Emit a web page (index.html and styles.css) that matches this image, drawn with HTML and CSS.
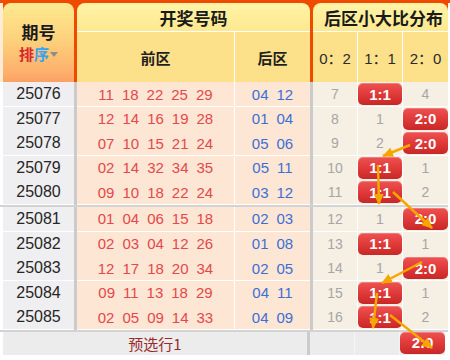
FILE: index.html
```html
<!DOCTYPE html>
<html lang="zh">
<head>
<meta charset="utf-8">
<link rel="stylesheet" href="styles.css">
</head>
<body>
<div class="board">
  <div class="head">
    <div class="h-issue">
      <div class="h-issue-title">期号</div>
      <div class="h-sort"><span class="s-red">排</span><span class="s-blue">序</span><span class="tri"></span></div>
    </div>
    <div class="h-group h-draw">
      <div class="h-title">开奖号码</div>
      <div class="h-sub">
        <div class="h-cell h-front">前区</div>
        <div class="h-cell">后区</div>
      </div>
    </div>
    <div class="h-group h-dist">
      <div class="h-title">后区小大比分布</div>
      <div class="h-sub h-sub3">
        <div class="h-cell h-ratio">0：2</div>
        <div class="h-cell h-ratio">1：1</div>
        <div class="h-cell h-ratio h-last">2：0</div>
      </div>
    </div>
  </div>

  <div class="group">
    <div class="row">
      <div class="c-issue">25076</div><div class="c-sep"></div>
      <div class="c-front"><span>11</span><span>18</span><span>22</span><span>25</span><span>29</span></div>
      <div class="c-back"><span>04</span><span>12</span></div><div class="c-sep"></div>
      <div class="c-d">7</div><div class="c-d"><b class="badge">1:1</b></div><div class="c-d">4</div>
    </div>
    <div class="row">
      <div class="c-issue">25077</div><div class="c-sep"></div>
      <div class="c-front"><span>12</span><span>14</span><span>16</span><span>19</span><span>28</span></div>
      <div class="c-back"><span>01</span><span>04</span></div><div class="c-sep"></div>
      <div class="c-d">8</div><div class="c-d">1</div><div class="c-d"><b class="badge">2:0</b></div>
    </div>
    <div class="row">
      <div class="c-issue">25078</div><div class="c-sep"></div>
      <div class="c-front"><span>07</span><span>10</span><span>15</span><span>21</span><span>24</span></div>
      <div class="c-back"><span>05</span><span>06</span></div><div class="c-sep"></div>
      <div class="c-d">9</div><div class="c-d">2</div><div class="c-d"><b class="badge">2:0</b></div>
    </div>
    <div class="row">
      <div class="c-issue">25079</div><div class="c-sep"></div>
      <div class="c-front"><span>02</span><span>14</span><span>32</span><span>34</span><span>35</span></div>
      <div class="c-back"><span>05</span><span>11</span></div><div class="c-sep"></div>
      <div class="c-d">10</div><div class="c-d"><b class="badge">1:1</b></div><div class="c-d">1</div>
    </div>
    <div class="row">
      <div class="c-issue">25080</div><div class="c-sep"></div>
      <div class="c-front"><span>09</span><span>10</span><span>18</span><span>22</span><span>24</span></div>
      <div class="c-back"><span>03</span><span>12</span></div><div class="c-sep"></div>
      <div class="c-d">11</div><div class="c-d"><b class="badge">1:1</b></div><div class="c-d">2</div>
    </div>
  </div>

  <div class="group">
    <div class="row">
      <div class="c-issue">25081</div><div class="c-sep"></div>
      <div class="c-front"><span>01</span><span>04</span><span>06</span><span>15</span><span>18</span></div>
      <div class="c-back"><span>02</span><span>03</span></div><div class="c-sep"></div>
      <div class="c-d">12</div><div class="c-d">1</div><div class="c-d"><b class="badge">2:0</b></div>
    </div>
    <div class="row">
      <div class="c-issue">25082</div><div class="c-sep"></div>
      <div class="c-front"><span>02</span><span>03</span><span>04</span><span>12</span><span>26</span></div>
      <div class="c-back"><span>01</span><span>08</span></div><div class="c-sep"></div>
      <div class="c-d">13</div><div class="c-d"><b class="badge">1:1</b></div><div class="c-d">1</div>
    </div>
    <div class="row">
      <div class="c-issue">25083</div><div class="c-sep"></div>
      <div class="c-front"><span>12</span><span>17</span><span>18</span><span>20</span><span>34</span></div>
      <div class="c-back"><span>02</span><span>05</span></div><div class="c-sep"></div>
      <div class="c-d">14</div><div class="c-d">1</div><div class="c-d"><b class="badge">2:0</b></div>
    </div>
    <div class="row">
      <div class="c-issue">25084</div><div class="c-sep"></div>
      <div class="c-front"><span>09</span><span>11</span><span>13</span><span>18</span><span>29</span></div>
      <div class="c-back"><span>04</span><span>11</span></div><div class="c-sep"></div>
      <div class="c-d">15</div><div class="c-d"><b class="badge">1:1</b></div><div class="c-d">1</div>
    </div>
    <div class="row">
      <div class="c-issue">25085</div><div class="c-sep"></div>
      <div class="c-front"><span>02</span><span>05</span><span>09</span><span>14</span><span>33</span></div>
      <div class="c-back"><span>04</span><span>09</span></div><div class="c-sep"></div>
      <div class="c-d">16</div><div class="c-d"><b class="badge">1:1</b></div><div class="c-d">2</div>
    </div>
  </div>

  <div class="foot">
    <div class="f-label">预选行1</div><div class="c-sep"></div>
    <div class="f-d"></div><div class="f-d"></div><div class="f-d"><b class="badge">2:0</b></div>
  </div>

  <svg class="arrows" width="450" height="360" viewBox="0 0 450 360">
    <defs>
      <marker id="ah" markerUnits="userSpaceOnUse" markerWidth="11" markerHeight="10" refX="10" refY="5" orient="auto">
        <path d="M0,0 L11,5 L0,10 Z" fill="#f7a600"/>
      </marker>
    </defs>
    <g stroke="#f7a600" stroke-width="2.5" fill="none" marker-end="url(#ah)">
      <line x1="410" y1="145" x2="383" y2="156"/>
      <line x1="378" y1="165" x2="379" y2="204"/>
      <line x1="393" y1="192" x2="432" y2="228"/>
      <line x1="422" y1="262" x2="382" y2="283"/>
      <line x1="377" y1="293" x2="373" y2="328"/>
      <line x1="390" y1="315" x2="432" y2="348"/>
    </g>
  </svg>
</div>
</body>
</html>
```

FILE: styles.css
```css
* { box-sizing: border-box; }
html, body { margin: 0; padding: 0; background: #ffffff; }
body { font-family: "Liberation Sans", "Noto Sans CJK SC", sans-serif; }

.board {
  position: relative;
  width: 450px;
  height: 360px;
}

.head {
  display: grid;
  grid-template-columns: 71px 233px 135px;
  column-gap: 3px;
  height: 82px;
  padding: 3px 2px 0 3px;
  background:
    linear-gradient(#f04a00, #f04a00) top / 100% 3px no-repeat,
    linear-gradient(#fdebd6, #fdebd6) left / 3px 100% no-repeat,
    linear-gradient(#ffffff, #ffffff) right / 2px 100% no-repeat,
    #f04a00;
}

.h-issue {
  border-radius: 8px 8px 0 0;
  background: linear-gradient(#fde98f 0%, #fdd27c 45%, #fdae6c 90%, #fca062 100%);
  display: flex;
  flex-direction: column;
  align-items: center;
  padding-top: 19px;
  font-family: "Noto Sans CJK SC", sans-serif;
}
.h-issue-title {
  font-size: 17px;
  font-weight: 700;
  color: #1a1a1a;
  line-height: 20px;
}
.h-sort {
  margin-top: 3px;
  font-size: 15px;
  font-weight: 700;
  line-height: 18px;
  display: flex;
  align-items: center;
}
.s-red { color: #d8262c; }
.s-blue { color: #35a2f2; }
.tri {
  display: inline-block;
  width: 0;
  height: 0;
  margin-left: 1px;
  border-left: 4px solid transparent;
  border-right: 4px solid transparent;
  border-top: 5px solid #8c8c8c;
}

.h-group {
  border-radius: 8px 8px 0 0;
  overflow: hidden;
  display: flex;
  flex-direction: column;
}
.h-title {
  height: 29px;
  border-bottom: 1px solid #ffffff;
  background: linear-gradient(#fff4a6, #fde88f);
  display: flex;
  align-items: center;
  justify-content: center;
  font-family: "Noto Sans CJK SC", sans-serif;
  font-size: 17px;
  font-weight: 700;
  color: #1a1a1a;
  padding-top: 1px;
}
.h-dist .h-title { padding-left: 6px; }
.h-sub {
  flex: 1;
  display: grid;
  grid-template-columns: 158px 75px;
  background: #fde18a;
}
.h-sub3 { grid-template-columns: 45px 45px 45px; }
.h-cell {
  display: flex;
  align-items: center;
  justify-content: center;
  font-family: "Noto Sans CJK SC", sans-serif;
  font-size: 15px;
  font-weight: 700;
  color: #1f1f1f;
}
.h-front { border-right: 1px solid #ffffff; }
.h-ratio {
  font-family: "Liberation Sans", "Noto Sans CJK SC", sans-serif;
  font-weight: 400;
  font-size: 15px;
  color: #2a2a2a;
  border-right: 1px solid #ffffff;
}
.h-ratio.h-last { border-right: none; }

.group {
  padding-left: 3px;
  border-bottom: 2px solid #d3d3d3;
  width: 448px;
}
.row {
  display: grid;
  grid-template-columns: 71px 3px 158px 75px 3px 45px 45px 45px;
  height: 24.6px;
}
.row > div { border-bottom: 1px solid #ffffff; }
.c-issue {
  background: #efeef0;
  display: flex;
  align-items: center;
  justify-content: center;
  font-size: 16px;
  color: #262626;
}
.c-sep { background: #cbcbcb; }
.row > .c-sep { border-bottom: none; }
.c-front, .c-back {
  background: #fde6d3;
  display: flex;
  align-items: center;
  justify-content: center;
  gap: 8px;
  font-size: 15px;
}
.c-front { color: #e4484c; border-right: 1px solid #ffffff; }
.c-back { color: #3c6fd6; }
.c-d {
  background: #f5efe4;
  border-right: 1px solid #ffffff;
  display: flex;
  align-items: center;
  justify-content: center;
  font-size: 14px;
  color: #a6a6a6;
  padding: 1px 0 1px;
}
.c-d:last-child { border-right: none; }

.badge {
  display: flex;
  align-items: center;
  justify-content: center;
  width: 100%;
  height: 22px;
  border-radius: 5px;
  background: linear-gradient(#ee5252 0%, #e03a3a 50%, #c92727 100%);
  box-shadow: inset 0 1px 0 rgba(255,255,255,0.25);
  color: #ffffff;
  font-size: 15px;
  font-weight: 700;
}

.foot {
  display: grid;
  grid-template-columns: 304px 3px 45px 45px 45px;
  height: 23px;
  margin-left: 3px;
  width: 442px;
}
.f-label {
  background: #ececec;
  display: flex;
  align-items: center;
  justify-content: center;
  font-family: "Noto Sans CJK SC", sans-serif;
  font-size: 15px;
  color: #9a2a2a;
}
.f-d {
  background: #ececec;
  border-right: 1px solid #f6f6f6;
  display: flex;
  align-items: center;
  padding: 0 0 1px;
}
.f-d:last-child { border-right: none; }

.arrows {
  position: absolute;
  left: 0;
  top: 0;
  pointer-events: none;
}
```
